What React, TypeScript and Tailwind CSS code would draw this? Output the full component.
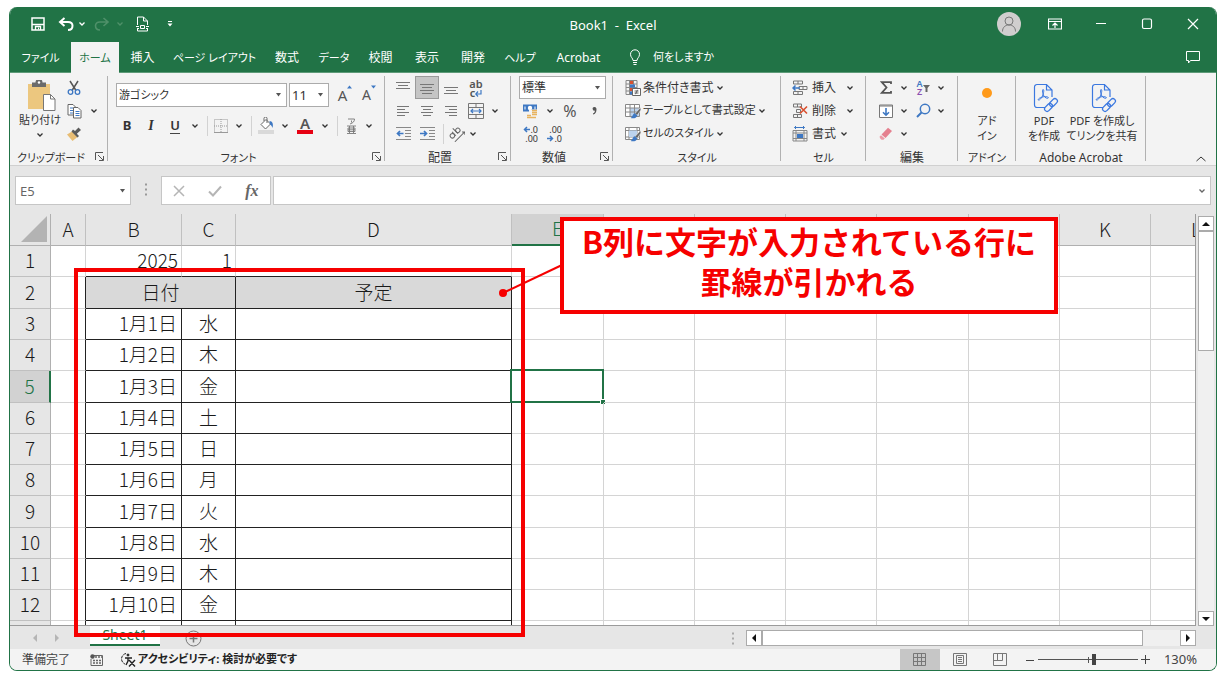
import type { ReactNode } from 'react'
import clsx from 'clsx'

interface IconProps {
  children: ReactNode
  w?: number
  h?: number
  className?: string
}

function Icon({ children, w = 16, h = 16, className }: IconProps) {
  return (
    <svg width={w} height={h} viewBox={`0 0 ${w} ${h}`} fill="none" stroke="currentColor" className={clsx('shrink-0', className)} aria-hidden="true">
      {children}
    </svg>
  )
}

function Chevron({ className = 'w-4' }: { className?: string }) {
  return (
    <button className={clsx('flex h-5 shrink-0 items-center justify-center', className)} aria-label="▾">
      <Icon w={8} h={6}>
        <path d="M1.500 1.500 4 4l2.500-2.500" strokeWidth="1.300" />
      </Icon>
    </button>
  )
}

function Tool({ children, label, className = 'w-6' }: { children: ReactNode; label: string; className?: string }) {
  return (
    <button aria-label={label} className={clsx('flex h-[23px] shrink-0 items-center justify-center', className)}>
      {children}
    </button>
  )
}

function Divider() {
  return (
    <span className="flex h-5 w-2 shrink-0 justify-center">
      <span className="w-px bg-[#d2d2d2]" />
    </span>
  )
}

function Launcher() {
  return (
    <button className="absolute right-1 bottom-1 text-[#555]" aria-label="↘">
      <Icon w={9} h={9}>
        <path d="M.5 8V.5H8M3 3l5 5M8.500 4v4.500H4" />
      </Icon>
    </button>
  )
}

interface GroupProps {
  title: string
  width: string
  small?: boolean
  launcher?: boolean
  children: ReactNode
}

function Group({ title, width, small, launcher, children }: GroupProps) {
  return (
    <section className={clsx('relative flex shrink-0 flex-col after:absolute after:top-0 after:right-0 after:bottom-1 after:w-px after:bg-[#b1b1b1]', width)}>
      <div className="h-[72px]">{children}</div>
      <h2 className={clsx('h-[17px] text-center leading-5', small ? 'text-[11px]' : 'text-xs', launcher && 'pr-4')}>{title}</h2>
      {launcher && <Launcher />}
    </section>
  )
}

function Combo({ label, value, className }: { label: string; value: string; className: string }) {
  return (
    <div className={clsx('relative shrink-0 border border-[#ababab] bg-white', className)}>
      <select aria-label={label} className="block h-full w-full appearance-none bg-transparent pl-0.5 leading-5 outline-none">
        <option>{value}</option>
      </select>
      <Icon w={7} h={4} className="pointer-events-none absolute top-1/2 right-1 -translate-y-1/2">
        <path d="M1 0h5L3.500 3.500z" fill="#555" stroke="none" />
      </Icon>
    </div>
  )
}

const tabs = [
  { name: 'ファイル', cls: 'w-[61px] text-[11px]' },
  { name: 'ホーム', cls: 'w-12 text-[11px]', active: true },
  { name: '挿入', cls: 'w-[47px] text-xs' },
  { name: 'ページ レイアウト', cls: 'w-[97px] text-[11px]' },
  { name: '数式', cls: 'w-12 text-xs' },
  { name: 'データ', cls: 'w-[46px] text-[11px]' },
  { name: '校閲', cls: 'w-[47px] text-xs' },
  { name: '表示', cls: 'w-[46px] text-xs' },
  { name: '開発', cls: 'w-[46px] text-xs' },
  { name: 'ヘルプ', cls: 'w-12 text-[11px]' },
  { name: 'Acrobat', cls: 'w-[69px] text-xs' },
]

function TitleBar() {
  return (
    <header className="relative flex h-[35px] shrink-0 items-center bg-[#217346] text-white">
      <div className="flex items-center pb-0.5 pl-5">
        <Tool label="上書き保存" className="w-4">
          <Icon w={14} h={14}>
            <path d="M1 1h12v12H1z" strokeWidth="1.500" />
            <path d="M1 7.500h12M4.500 13v-3.500h5V13" strokeWidth="1.300" />
            <path d="M7.500 10.500v2" />
          </Icon>
        </Tool>
        <Tool label="元に戻す" className="ml-2.5 w-5">
          <Icon w={16} h={14}>
            <path d="M6.500 1 2 5l4.500 4M2.500 5H10c3 0 4.500 1.500 4.500 3.800S13 13 10 13" strokeWidth="2" />
          </Icon>
        </Tool>
        <Chevron className="w-3" />
        <Tool label="やり直し" className="ml-1 w-5 text-[#4f9069]">
          <Icon w={16} h={14}>
            <path d="M9.500 1 14 5 9.500 9M13.500 5H6C3 5 1.500 6.500 1.500 8.800S3 13 6 13" strokeWidth="1.600" />
          </Icon>
        </Tool>
        <Chevron className="w-4 text-[#4f9069]" />
        <Tool label="印刷プレビュー" className="ml-1 w-5">
          <Icon w={13} h={16}>
            <path d="M1.500 9V1h6l4 4v4M7.500 1v4h4M1.500 12.500v2.500h10v-2.500" />
            <path d="M0 10.500h3M10 10.500h3M4.500 9.500h4v3h-4zM1 12.500h2M10 12.500h2" />
          </Icon>
        </Tool>
        <Tool label="クイック アクセス ツール バーのユーザー設定" className="ml-2.5 w-4">
          <Icon w={6} h={6}>
            <path d="M1 .5h4" />
            <path d="M.5 2.500h5L3 5.500z" fill="currentColor" stroke="none" />
          </Icon>
        </Tool>
      </div>
      <h1 className="absolute left-1/2 -translate-x-1/2 pt-0.5 text-[13px] whitespace-pre">Book1  -  Excel</h1>
      <div className="ml-auto flex items-center pb-0.5">
        <button aria-label="アカウント" className="mr-[11px] rounded-full bg-[#d0cece] text-[#777]">
          <Icon w={24} h={24}>
            <circle cx="12" cy="9" r="4" />
            <path d="M5.500 19.500c0-4 2.500-6.500 6.500-6.500s6.500 2.500 6.500 6.500" />
          </Icon>
        </button>
        <Tool label="リボンの表示オプション" className="w-[46px]">
          <Icon w={14} h={12}>
            <path d="M.5 1h13v10H.5zM.5 3.500h13M7 10V5.500M4.500 7.500 7 5l2.500 2.500" strokeWidth="1.200" />
          </Icon>
        </Tool>
        <Tool label="最小化" className="w-[46px]">
          <Icon w={12} h={12}><path d="M1 5.500h10" /></Icon>
        </Tool>
        <Tool label="最大化" className="w-[46px]">
          <Icon w={12} h={12}><rect x="1.500" y="1" width="9" height="9.500" rx="1.500" strokeWidth="1.200" /></Icon>
        </Tool>
        <Tool label="閉じる" className="w-[46px]">
          <Icon w={12} h={12}><path d="m1 1 10 10M11 1 1 11" strokeWidth="1.200" /></Icon>
        </Tool>
      </div>
    </header>
  )
}

function TabBar() {
  return (
    <nav className="flex h-[31px] shrink-0 items-stretch border-b border-[#5d9a78] bg-[#217346] text-white">
      {tabs.map((tab) => (
        <button key={tab.name} className={clsx('shrink-0 pt-0.5 whitespace-nowrap', tab.cls, tab.active && '-mb-px bg-[#f3f3f3] text-[#217346]')}>
          {tab.name}
        </button>
      ))}
      <button className="ml-3 flex items-center gap-3 pl-1 text-[11px]">
        <Icon w={12} h={16}>
          <path d="M4 11.500C4 9 1.500 8.500 1.500 5.300a4.500 4.500 0 0 1 9 0C10.500 8.500 8 9 8 11.500zM4 13.500h4M4.500 15.500h3" />
        </Icon>
        何をしますか
      </button>
      <button className="mr-[15px] ml-auto" aria-label="コメント">
        <Icon>
          <path d="M1.500 2.500h13v9h-9l-2 2.500v-2.500h-2z" />
        </Icon>
      </button>
    </nav>
  )
}

function ClipboardGroup() {
  return (
    <Group title="クリップボード" width="w-[98px]" small launcher>
      <div className="flex pl-2">
        <button className="flex w-11 flex-col items-center pt-1">
          <Icon w={30} h={32} className="ml-1">
            <path d="M1 4h22v25H1z" fill="#ecc77f" stroke="none" />
            <path d="M5 2.500h3.500a3.500 3.500 0 0 1 7 0H19V7H5z" fill="#6b6b6b" stroke="none" />
            <circle cx="12" cy="2.500" r="1.200" fill="#fff" stroke="none" />
            <path d="M16.500 14.500h7l4.500 4.500v11.500H16.500z" fill="#fff" stroke="#777" />
            <path d="M23.500 14.500V19H28" stroke="#777" />
          </Icon>
          <span className="text-[11px] leading-4 whitespace-nowrap">貼り付け</span>
          <Icon w={8} h={6} className="mt-1"><path d="M1.500 1.500 4 4l2.500-2.500" strokeWidth="1.300" /></Icon>
        </button>
        <div>
          <Tool label="切り取り" className="w-6">
            <Icon w={14} h={16}>
              <path d="M3 1l6 9.500M11 1 5 10.500" stroke="#555" strokeWidth="1.500" />
              <circle cx="3.500" cy="12" r="2.300" stroke="#3e78c3" strokeWidth="1.300" />
              <circle cx="10.500" cy="12" r="2.300" stroke="#3e78c3" strokeWidth="1.300" />
            </Icon>
          </Tool>
          <div className="flex items-center">
            <Tool label="コピー">
              <Icon w={15} h={16}>
                <path d="M1 1.500h5l3 3V12H1z" fill="#fff" stroke="#666" />
                <path d="M3 5h3M3 7.500h3M3 10h3" stroke="#3e78c3" />
                <path d="M6.500 4.500h4.500l3 3V15H6.500z" fill="#fff" stroke="#666" />
                <path d="M8.500 8.500h4M8.500 10.500h4M8.500 12.500h4" stroke="#3e78c3" />
              </Icon>
            </Tool>
            <Chevron />
          </div>
          <Tool label="書式のコピー/貼り付け">
            <Icon w={14} h={14}>
              <path d="m0 7.500 5-3 5.500 5.500-5 4z" fill="#e8bd74" stroke="none" />
              <path d="m4.500 4.500 6 6L12 9 9.800 6.800 14 3 11.500.5 8 4 6 2.500z" fill="#5b5b5b" stroke="none" />
            </Icon>
          </Tool>
        </div>
      </div>
    </Group>
  )
}

function FontGroup() {
  return (
    <Group title="フォント" width="w-[277px]" small launcher>
      <div className="mt-[7px] flex h-6 items-center gap-0.5 pl-2">
        <Combo label="フォント名" value="游ゴシック" className="h-6 w-[171px] text-[11px]" />
        <Combo label="フォント サイズ" value="11" className="h-6 w-10 text-[13px]" />
        <Tool label="フォント サイズの拡大" className="ml-0.5 w-6">
          <span className="text-[15px] leading-5 text-[#555]">A</span>
          <Icon w={5} h={12} className="self-start"><path d="M0 4.500 2.500 1.500 5 4.500z" fill="#3e78c3" stroke="none" /></Icon>
        </Tool>
        <Tool label="フォント サイズの縮小" className="w-5">
          <span className="text-sm leading-5 text-[#555]">A</span>
          <Icon w={5} h={12} className="self-start"><path d="M0 1.500h5L2.500 4.500z" fill="#3e78c3" stroke="none" /></Icon>
        </Tool>
      </div>
      <div className="mt-[7px] flex items-center pl-[7px] text-[13px]">
        <Tool label="太字"><b>B</b></Tool>
        <Tool label="斜体"><i className="font-['Liberation_Serif'] text-sm font-bold">I</i></Tool>
        <Tool label="下線"><span className="border-b border-[#444] leading-[15px] font-semibold">U</span></Tool>
        <Chevron />
        <Divider />
        <Tool label="罫線" className="w-5">
          <Icon w={14} h={14}>
            <path d="M.5.5h13v13H.5zM7 0v14M0 7h14" stroke="#999" strokeDasharray="1 1" />
            <path d="M0 13.500h14" stroke="#999" />
          </Icon>
        </Tool>
        <Chevron />
        <Divider />
        <Tool label="塗りつぶしの色" className="w-[22px]">
          <Icon w={17} h={17}>
            <path d="M3 7.500 8 2.500l4.500 4.500-5 5zM6 4V1.500a1.500 1.500 0 0 1 3 0V6" stroke="#666" fill="#fff" />
            <path d="M11.500 4c3 0 4 3 3 7-.5-2-1.500-3-2.500-3.500z" fill="#3e78c3" stroke="none" />
            <path d="M0 13h16v4H0z" fill="#d9d9d9" stroke="none" />
          </Icon>
        </Tool>
        <Chevron />
        <Tool label="フォントの色" className="w-6 flex-col">
          <span className="text-[15px] leading-[13px] font-semibold text-[#555]">A</span>
          <span className="h-1 w-4 bg-[#e60012]" />
        </Tool>
        <Chevron />
        <Divider />
        <Tool label="ふりがなの表示/非表示" className="w-5">
          <Icon w={9} h={16}>
            <path d="M1 1h6.500C7.500 3.500 6 5 3 6M4.500 2.500v2M0 8h9M0 15.500h9M2.500 8v7M6.500 8v7M1 10v3.500h7V10zM1 11.800h7" stroke="#777" strokeWidth=".9" />
          </Icon>
        </Tool>
        <Chevron />
      </div>
    </Group>
  )
}

function Lines({ d, w = 14, h = 14 }: { d: string; w?: number; h?: number }) {
  return <Icon w={w} h={h}><path d={d} stroke="#777" /></Icon>
}

function AlignGroup() {
  return (
    <Group title="配置" width="w-[126px]" launcher>
      <div className="flex pl-1.5">
        <Tool label="上揃え"><Lines d="M0 1.500h14M2 4.500h10M0 7.500h14" /></Tool>
        <Tool label="上下中央揃え" className="w-6 border border-[#9a9a9a] bg-[#c5c5c5]"><Lines d="M0 3.500h14M2 6.500h10M0 9.500h14M2 12.500h10" /></Tool>
        <Tool label="下揃え"><Lines d="M0 6.500h14M2 9.500h10M0 12.500h14" /></Tool>
        <Tool label="折り返して全体を表示する" className="w-[26px] flex-col">
          <span className="text-[11px] leading-[9px] font-semibold text-[#555]">ab</span>
          <span className="flex items-end text-[11px] leading-[9px] font-semibold text-[#555]">
            c
            <Icon w={7} h={7}><path d="M6 0v4H1M3 1.500.8 4 3 6.500" stroke="#3e78c3" strokeWidth="1.200" /></Icon>
          </span>
        </Tool>
      </div>
      <div className="flex items-center pl-1.5">
        <Tool label="左揃え"><Lines w={12} h={12} d="M0 1.500h12M0 4.500h8M0 7.500h12M0 10.500h8" /></Tool>
        <Tool label="中央揃え"><Lines w={12} h={12} d="M0 1.500h12M2 4.500h8M0 7.500h12M2 10.500h8" /></Tool>
        <Tool label="右揃え"><Lines w={12} h={12} d="M0 1.500h12M4 4.500h8M0 7.500h12M4 10.500h8" /></Tool>
        <Tool label="セルを結合して中央揃え" className="w-[26px]">
          <Icon>
            <path d="M.5.5h15v15H.5zM.5 4.500h15M.5 11.500h15M8 .5v4M8 11.500v4" stroke="#777" />
            <path d="M3 8h10M5 6 3 8l2 2M11 6l2 2-2 2" stroke="#3e78c3" strokeWidth="1.200" />
          </Icon>
        </Tool>
        <Chevron className="w-3" />
      </div>
      <div className="flex items-center pl-1.5">
        <Tool label="インデントを減らす">
          <Icon w={15} h={13}>
            <path d="M0 .5h15M9 3.500h6M9 6.500h6M9 9.500h6M0 12.500h15" stroke="#888" />
            <path d="M7.500 6.500H1.500M4 4 1.500 6.500 4 9" stroke="#3e78c3" strokeWidth="1.700" />
          </Icon>
        </Tool>
        <Tool label="インデントを増やす">
          <Icon w={15} h={13}>
            <path d="M0 .5h15M9 3.500h6M9 6.500h6M9 9.500h6M0 12.500h15" stroke="#888" />
            <path d="M0 6.500h6M4 4l2.500 2.500L4 9" stroke="#3e78c3" strokeWidth="1.700" />
          </Icon>
        </Tool>
        <Divider />
        <Tool label="方向" className="w-5">
          <Icon>
            <g transform="rotate(-45 8 8)" stroke="#666">
              <circle cx="3.500" cy="6" r="2.200" />
              <path d="M6 3v5.500M9 1v7.500" />
              <circle cx="11.200" cy="6" r="2.200" />
              <path d="M1 12h14M13 10l2 2-2 2" />
            </g>
          </Icon>
        </Tool>
        <Chevron className="w-3" />
      </div>
    </Group>
  )
}

function NumberGroup() {
  return (
    <Group title="数値" width="w-[102px]" launcher>
      <div className="pl-2">
        <Combo label="表示形式" value="標準" className="h-[23px] w-[87px] text-xs" />
      </div>
      <div className="flex items-center pl-[7px]">
        <Tool label="通貨表示形式">
          <Icon>
            <path d="M1 1.500h14v7H1z" fill="#3e78c3" stroke="none" />
            <circle cx="8" cy="5" r="2.200" fill="#fff" stroke="none" />
            <path d="M3 3.500v3M13 3.500v3" stroke="#fff" />
            <path d="M7 6.500h9v9H7z" fill="#f3f3f3" stroke="none" />
            <path d="M10 7.500h5M10 9.500h5M10 11.500h5M5 12.500h4M5 14.500h9" stroke="#e8b35f" strokeWidth="1.300" />
          </Icon>
        </Tool>
        <Chevron />
        <Tool label="パーセント スタイル"><span className="text-base leading-5 text-[#555]">%</span></Tool>
        <Tool label="桁区切りスタイル">
          <Icon w={5} h={8}>
            <path d="M2.500 0a1.800 1.800 0 1 0 .5 3.500C2.900 5 2 6 1 6.500v1C3.500 7 4.500 5 4.500 2.200 4.500.8 3.600 0 2.500 0z" fill="#555" stroke="none" />
          </Icon>
        </Tool>
      </div>
      <div className="flex items-center pl-[7px]">
        <Tool label="小数点以下の表示桁数を増やす" className="w-6 flex-col items-end pr-1">
          <span className="flex items-center text-[9px] leading-[9px]">
            <Icon w={7} h={7}><path d="M7 3.500H1.500M4 1 1.500 3.500 4 6" stroke="#3e78c3" strokeWidth="1.500" /></Icon>.0
          </span>
          <span className="text-[9px] leading-[9px]">.00</span>
        </Tool>
        <Tool label="小数点以下の表示桁数を減らす" className="w-6 flex-col items-end pr-1">
          <span className="text-[9px] leading-[9px]">.00</span>
          <span className="flex items-center text-[9px] leading-[9px]">
            <Icon w={7} h={7}><path d="M0 3.500h5.500M3 1l2.500 2.500L3 6" stroke="#3e78c3" strokeWidth="1.500" /></Icon>.0
          </span>
        </Tool>
      </div>
    </Group>
  )
}

function MenuButton({ icon, text, className, gap = 'gap-1' }: { icon: ReactNode; text: string; className?: string; gap?: string }) {
  return (
    <button className={clsx('flex h-[23px] items-center whitespace-nowrap', gap, className)}>
      {icon}
      <span>{text}</span>
      <Icon w={8} h={6} className="ml-auto"><path d="M1.500 1.500 4 4l2.500-2.500" strokeWidth="1.300" /></Icon>
    </button>
  )
}

function Brush() {
  return (
    <>
      <path d="M15.500 4.500 10 10.500l2 2L16 7z" fill="#666" stroke="#f3f3f3" strokeWidth=".6" />
      <path d="M9.800 10.200C7.500 10.800 8 13.500 5.500 15c3 .8 6 .3 6.800-2.500z" fill="#3e78c3" stroke="none" />
    </>
  )
}

function StyleGroup() {
  return (
    <Group title="スタイル" width="w-[168px]" small>
      <div className="flex flex-col items-start pl-3 text-xs">
        <MenuButton
          gap="gap-0.5"
          text="条件付き書式"
          icon={
            <Icon>
              <path d="M1 .5h11v14H1zM1 4h11M1 7.500h11M1 11h11M4.500.5v14M8.500.5v14" stroke="#888" />
              <path d="M5 1h3v3H5zM5 8h3v3H5z" fill="#d9502f" stroke="none" />
              <path d="M5 4.500h5v3H5zM5 11.500h2v3H5z" fill="#3e78c3" stroke="none" />
              <path d="M7.500 8.500h8v7h-8z" fill="#fff" stroke="#666" />
              <path d="M9.500 11h4M9.500 13h4M12.500 9.800l-2 4.400" stroke="#555" strokeWidth=".9" />
            </Icon>
          }
        />
        <MenuButton
          gap="gap-0.5"
          className="text-[11px]"
          text="テーブルとして書式設定"
          icon={
            <Icon>
              <path d="M.5 1.500h14v12H.5z" fill="#fff" stroke="#888" />
              <path d="M5 5h9v8H5z" fill="#bcd3ee" stroke="none" />
              <path d="M.5 5h14M.5 9h14M5 1.500v12M9.500 1.500v12" stroke="#888" />
              <Brush />
            </Icon>
          }
        />
        <MenuButton
          gap="gap-0.5"
          className="text-[11px]"
          text="セルのスタイル"
          icon={
            <Icon>
              <path d="M.5 1.500h14v12H.5zM.5 4.500h14M.5 11h14M4 1.500v12M12 1.500v12" stroke="#888" fill="#fff" />
              <path d="M4 4.500h8V11H4z" fill="#bcd3ee" stroke="none" />
              <Brush />
            </Icon>
          }
        />
      </div>
    </Group>
  )
}

function CellsGroup() {
  return (
    <Group title="セル" width="w-[85px]" small>
      <div className="pl-[11px] text-xs">
        <MenuButton
          className="w-[62px]"
          text="挿入"
          icon={
            <Icon>
              <path d="M1.500 1h9v3h-9zM6 1v3M1.500 11.500h9v3h-9zM6 11.500v3M7 6.500h8v3H7zM11 6.500v3" stroke="#777" />
              <path d="M8 8H1M3.500 5.500 1 8l2.500 2.500" stroke="#3e78c3" strokeWidth="1.500" />
            </Icon>
          }
        />
        <MenuButton
          className="w-[62px]"
          text="削除"
          icon={
            <Icon>
              <path d="M1.500 1h8v3h-8zM5.500 1v3M1.500 11.500h8v3h-8zM5.500 11.500v3M4.500 6.500h4v3h-4z" stroke="#777" />
              <path d="m8 3.500 7 7M15 3.500l-7 7" stroke="#d9502f" strokeWidth="1.600" />
            </Icon>
          }
        />
        <MenuButton
          className="w-[55px]"
          text="書式"
          icon={
            <Icon>
              <path d="M2.500 1.500h10M4 0 2.500 1.500 4 3M11 0l1.500 1.500L11 3" stroke="#3e78c3" />
              <path d="M1 4.500h14V15H1zM1 7h14M1 12.500h14M4 4.500V15M12 4.500V15" stroke="#888" />
              <path d="M5 8h6v4H5z" fill="#3e78c3" stroke="none" />
            </Icon>
          }
        />
      </div>
    </Group>
  )
}

function EditGroup() {
  return (
    <Group title="編集" width="w-[92px]">
      <div className="flex items-center pl-[9px]">
        <Tool label="オート SUM" className="w-[22px]">
          <Icon w={12} h={13}><path d="M11 3V1.200H1.800L6.500 6.500l-4.700 5.300H11V10" stroke="#555" strokeWidth="1.800" /></Icon>
        </Tool>
        <Chevron className="w-3.5" />
        <Tool label="並べ替えとフィルター">
          <span className="flex flex-col text-[9px] leading-[8px] font-semibold">
            <span className="text-[#3e78c3]">A</span>
            <span className="text-[#8a4fb0]">Z</span>
          </span>
          <Icon w={7} h={8}><path d="M0 1h7L4.500 4v4h-2V4z" fill="#666" stroke="none" /></Icon>
        </Tool>
        <Chevron className="w-3" />
      </div>
      <div className="flex items-center pl-[9px]">
        <Tool label="フィル" className="w-[22px]">
          <Icon w={14} h={14}>
            <path d="M.5 1h13v12.500H.5z" fill="#fff" stroke="#777" />
            <path d="M1 2h12" stroke="#777" />
            <path d="M7 4v7M4 8.200l3 3 3-3" stroke="#3e78c3" strokeWidth="1.600" />
          </Icon>
        </Tool>
        <Chevron className="w-3.5" />
        <Tool label="検索と選択">
          <Icon w={15} h={15}>
            <circle cx="9" cy="6" r="4.700" stroke="#3e78c3" strokeWidth="1.500" />
            <path d="M5.500 9.500 1 14" stroke="#3e78c3" strokeWidth="2" />
          </Icon>
        </Tool>
        <Chevron className="w-3" />
      </div>
      <div className="flex items-center pl-[9px]">
        <Tool label="クリア" className="w-[22px]">
          <Icon w={14} h={13}>
            <path d="M9 .8 13 4 6.500 11 2.500 7.500z" fill="#e5808f" stroke="none" />
            <path d="M2 8.200 5.800 11.600 4.500 12.800H2.500L.8 11V9.500z" fill="#ec9ba7" stroke="none" />
          </Icon>
        </Tool>
        <Chevron className="w-3.5" />
      </div>
    </Group>
  )
}

function PdfIcon() {
  return (
    <Icon w={26} h={30} className="ml-1 text-[#3b78e0]">
      <path d="M12 24.500H4A2.500 2.500 0 0 1 1.500 22V4A2.500 2.500 0 0 1 4 1.500h9.500l5.500 5.500V14M13.500 1.500V7H19" strokeWidth="1.200" />
      <path d="M10 6.500c1.500 0 .5 4-.5 6.500-.8 2-3.500 5-4.200 4-.8-1.200 3-3 5.500-3.300 2.500-.3 5 .2 4.500 1.300-.6 1-3.300-.3-4.300-1.800C9.800 11.500 9 6.500 10 6.500z" />
      <g transform="rotate(-45 18 22)" strokeWidth="1.300">
        <rect x="10" y="19.500" width="9" height="5" rx="2.500" />
        <rect x="17" y="19.500" width="9" height="5" rx="2.500" />
      </g>
    </Icon>
  )
}

function Ribbon() {
  return (
    <div className="flex h-[93px] shrink-0 overflow-hidden border-b border-[#d0d0d0] bg-[#f3f3f3] pt-[3px] text-[#333]">
      <ClipboardGroup />
      <FontGroup />
      <AlignGroup />
      <NumberGroup />
      <StyleGroup />
      <CellsGroup />
      <EditGroup />
      <Group title="アドイン" width="w-[58px]" small>
        <button className="flex w-full flex-col items-center pt-[11px] text-[11px] leading-[15px]">
          <Icon w={12} h={12} className="mb-3.5"><circle cx="6" cy="6" r="5" fill="#ff9a1a" stroke="none" /></Icon>
          <span>アド<br />イン</span>
        </button>
      </Group>
      <Group title="Adobe Acrobat" width="w-[130px]">
        <div className="flex pl-[5px] text-[11px] leading-[15px]">
          <button className="flex w-[46px] flex-col items-center pt-[7px]">
            <PdfIcon />
            <span className="whitespace-nowrap">PDF<br />を作成</span>
          </button>
          <button className="flex w-[70px] flex-col items-center pt-[7px]">
            <PdfIcon />
            <span className="whitespace-nowrap">PDF を作成し<br />てリンクを共有</span>
          </button>
        </div>
      </Group>
      <button className="mr-2.5 mb-[3px] ml-auto self-end" aria-label="リボンを折りたたむ">
        <Icon w={10} h={6}><path d="m.5 5 4.500-4 4.500 4" /></Icon>
      </button>
    </div>
  )
}

function FormulaBar() {
  return (
    <div className="flex h-12 shrink-0 items-start bg-[#e6e6e6] px-[5px] pt-2.5 text-[#666]">
      <Combo label="名前ボックス" value="E5" className="h-[29px] w-[116px] border-[#c6c6c6] pl-0.5 text-[13px]" />
      <Icon w={4} h={13} className="mx-[13px] mt-[7px]">
        <path d="M1 1.500h2M1 6.500h2M1 11.500h2" stroke="#999" strokeWidth="2" />
      </Icon>
      <div className="flex h-[29px] w-[110px] items-center justify-around border border-[#c6c6c6] bg-white">
        <button aria-label="キャンセル"><Icon w={12} h={12}><path d="m1 1 10 10M11 1 1 11" stroke="#b5b5b5" strokeWidth="1.500" /></Icon></button>
        <button aria-label="入力"><Icon w={14} h={12}><path d="m1 6.500 4 4L13 1.500" stroke="#b5b5b5" strokeWidth="2" /></Icon></button>
        <button className="font-['Liberation_Serif'] text-base leading-4 font-bold italic" aria-label="関数の挿入">fx</button>
      </div>
      <div className="ml-0.5 flex h-[29px] flex-1 items-center border border-[#c6c6c6] bg-white">
        <input aria-label="数式バー" className="h-full flex-1 px-2 outline-none" />
        <Chevron />
      </div>
    </div>
  )
}

const columns = [
  { name: 'A', width: 'w-[35px]' },
  { name: 'B', width: 'w-[96px]' },
  { name: 'C', width: 'w-[54px]' },
  { name: 'D', width: 'w-[276px]' },
  { name: 'E', width: 'w-[92px]' },
  { name: 'F', width: 'w-[91px]' },
  { name: 'G', width: 'w-[91px]' },
  { name: 'H', width: 'w-[91px]' },
  { name: 'I', width: 'w-[92px]' },
  { name: 'J', width: 'w-[91px]' },
  { name: 'K', width: 'w-[91px]' },
  { name: 'L', width: 'w-[91px]' },
]

const schedule = [
  ['1月1日', '水'],
  ['1月2日', '木'],
  ['1月3日', '金'],
  ['1月4日', '土'],
  ['1月5日', '日'],
  ['1月6日', '月'],
  ['1月7日', '火'],
  ['1月8日', '水'],
  ['1月9日', '木'],
  ['1月10日', '金'],
  ['', ''],
]

const emptyColumns = ['E', 'F', 'G', 'H', 'I', 'J', 'K', 'L']
const tallRows = [5, 9]

const line = 'border-r border-b border-[#d4d4d4]'
const ruled = 'border-r border-b border-[#222]'

function RowHeader({ row }: { row: number }) {
  return (
    <th
      scope="row"
      className={clsx(
        'border-b border-b-[#c0c0c0] font-light',
        row === 5 ? 'border-r-2 border-r-[#217346] bg-[#d2d2d2] text-[#217346]' : 'border-r border-r-[#b0b0b0] bg-[#e6e6e6]',
      )}
    >
      {row < 13 && row}
    </th>
  )
}

function EmptyCells({ row }: { row: number }) {
  return (
    <>
      {emptyColumns.map((col) => (
        <td key={col} className={clsx(line, 'relative')}>
          {row === 5 && col === 'E' && (
            <span className="absolute -top-0.5 -right-px -bottom-px -left-0.5 border-2 border-[#217346]">
              <span className="absolute -right-[3px] -bottom-[3px] size-[5px] border-t border-l border-white bg-[#217346]" />
            </span>
          )}
        </td>
      ))}
    </>
  )
}

function Sheet() {
  return (
    <div className="min-w-0 flex-1 overflow-hidden border-r border-b border-[#9b9b9b] bg-white">
      <table className="w-[1232px] min-w-full table-fixed border-separate border-spacing-0 font-['Noto_Sans_CJK_JP',sans-serif] text-[19px] leading-[28px] font-light text-[#1a1a1a] [&_td]:pb-0.5 [&_th]:pb-0.5">
        <thead>
          <tr className="h-8">
            <th className="w-[41px] border-r border-b border-[#b0b0b0] bg-[#e6e6e6]">
              <Icon w={27} h={26} className="mr-0.5 ml-auto"><path d="M26 0v26H0z" fill="#b3b3b3" stroke="none" /></Icon>
            </th>
            {columns.map((col) => (
              <th
                key={col.name}
                scope="col"
                className={clsx(
                  'border-r border-r-[#c0c0c0] font-light',
                  col.width,
                  col.name === 'E' ? 'border-b-2 border-b-[#217346] bg-[#d2d2d2] text-[#217346]' : 'border-b border-b-[#b0b0b0] bg-[#e6e6e6]',
                )}
              >
                {col.name}
              </th>
            ))}
          </tr>
        </thead>
        <tbody>
          <tr className="h-[31px]">
            <RowHeader row={1} />
            <td className={line} />
            <td className="border-r border-b border-r-[#d4d4d4] border-b-[#222] pr-[3px] text-right">2025</td>
            <td className="border-r border-b border-r-[#d4d4d4] border-b-[#222] pr-[3px] text-right">1</td>
            <td className="border-r border-b border-r-[#d4d4d4] border-b-[#222]" />
            <EmptyCells row={1} />
          </tr>
          <tr className="h-8">
            <RowHeader row={2} />
            <td className="border-r border-b border-r-[#222] border-b-[#d4d4d4]" />
            <td colSpan={2} className={clsx(ruled, 'bg-[#d9d9d9] text-center')}>日付</td>
            <td className={clsx(ruled, 'bg-[#d9d9d9] text-center')}>予定</td>
            <EmptyCells row={2} />
          </tr>
          {schedule.map(([date, day], i) => (
            <tr key={i} className={tallRows.includes(i + 3) ? 'h-8' : 'h-[31px]'}>
              <RowHeader row={i + 3} />
              <td className="border-r border-b border-r-[#222] border-b-[#d4d4d4]" />
              <td className={clsx(ruled, 'pr-1 text-right whitespace-nowrap')}>{date}</td>
              <td className={clsx(ruled, 'text-center')}>{day}</td>
              <td className={ruled} />
              <EmptyCells row={i + 3} />
            </tr>
          ))}
        </tbody>
      </table>
    </div>
  )
}

function VerticalScroll() {
  return (
    <div className="flex w-5 shrink-0 flex-col items-center bg-[#e6e6e6] pt-0.5">
      <div className="flex w-4 flex-1 flex-col bg-[#f0f0f0]">
        <button aria-label="上へ" className="flex h-[15px] items-center justify-center border border-[#ababab] bg-white">
          <Icon w={8} h={4}><path d="m0 4 4-4 4 4z" fill="#111" stroke="none" /></Icon>
        </button>
        <div className="h-[120px] border border-[#ababab] bg-white" />
        <button aria-label="下へ" className="mt-auto flex h-[15px] items-center justify-center border border-[#ababab] bg-white">
          <Icon w={8} h={4}><path d="m0 0 4 4 4-4z" fill="#111" stroke="none" /></Icon>
        </button>
      </div>
    </div>
  )
}

function Annotations() {
  return (
    <>
      <div className="pointer-events-none absolute top-[54px] left-16 z-10 h-[369px] w-[451px] border-4 border-[#f60000]" />
      <svg width="80" height="50" viewBox="0 0 80 50" className="absolute top-[42px] left-[480px] z-10" aria-hidden="true">
        <path d="M13 37 72 9" stroke="#f60000" strokeWidth="2" />
        <circle cx="13" cy="37" r="4" fill="#f60000" />
      </svg>
      <p className="absolute top-[3px] left-[550px] z-20 h-[97px] w-[498px] border-4 border-[#f60000] bg-white text-center font-['Noto_Sans_CJK_JP',sans-serif] text-[31px] leading-10 font-bold whitespace-nowrap text-[#f60000] [font-feature-settings:normal]">
        B列に文字が入力されている行に
        <br />
        罫線が引かれる
      </p>
    </>
  )
}

function SheetTabs() {
  return (
    <div className="flex h-[23px] shrink-0 items-start bg-[#e6e6e6]">
      <div className="flex h-full w-20 items-center gap-4 pl-[22px]">
        <Icon w={6} h={8}><path d="M5 0v8L1 4z" fill="#b5b5b5" stroke="none" /></Icon>
        <Icon w={6} h={8}><path d="M1 0v8l4-4z" fill="#b5b5b5" stroke="none" /></Icon>
      </div>
      <button className="h-5 w-[70px] border-b-2 border-[#217346] bg-white text-sm leading-[18px] text-[#217346]">Sheet1</button>
      <button aria-label="新しいシート" className="mt-1 ml-[25px]">
        <Icon w={17} h={17}>
          <circle cx="8.500" cy="8.500" r="7.500" stroke="#777" />
          <path d="M8.500 4.500v8M4.500 8.500h8" stroke="#777" strokeWidth="1.500" />
        </Icon>
      </button>
      <div className="mt-1 mr-5 ml-auto flex h-4 w-[465px] items-stretch">
        <Icon w={4} h={13} className="mt-0.5 mr-[11px]">
          <path d="M1 1.500h2M1 6.500h2M1 11.500h2" stroke="#aaa" strokeWidth="2" />
        </Icon>
        <button aria-label="左へ" className="flex w-4 items-center justify-center border border-[#ababab] bg-white">
          <Icon w={4} h={8}><path d="M4 0v8L0 4z" fill="#111" stroke="none" /></Icon>
        </button>
        <div className="w-[381px] border border-[#ababab] bg-white" />
        <div className="flex-1 bg-[#f0f0f0]" />
        <button aria-label="右へ" className="flex w-4 items-center justify-center border border-[#ababab] bg-white">
          <Icon w={4} h={8}><path d="M0 0v8l4-4z" fill="#111" stroke="none" /></Icon>
        </button>
      </div>
    </div>
  )
}

function StatusBar() {
  return (
    <footer className="flex h-[21px] shrink-0 items-center bg-[#f3f3f3] pl-3 text-xs text-[#444]">
      <span>準備完了</span>
      <Icon w={13} h={12} className="ml-5">
        <path d="M3 1.500h9.500v10H1V5" stroke="#666" />
        <circle cx="2.500" cy="2.500" r="2.200" fill="#555" stroke="none" />
        <path d="M5 3h7M3 6.500h8M3 9h8" stroke="#666" strokeWidth="1.500" strokeDasharray="2 1" />
      </Icon>
      <button className="ml-[17px] flex items-center gap-0.5 text-[11px] font-bold text-[#222]">
        <Icon>
          <path d="M6 1.500a5.500 5.500 0 0 0-1 10.500" strokeDasharray="3 1" />
          <circle cx="8" cy="3" r="1" fill="currentColor" />
          <path d="M5 6h7M8 6v3l-2 4M9 8l6 6.500M15 8l-6 6.500" strokeWidth="1.400" />
        </Icon>
        アクセシビリティ: 検討が必要です
      </button>
      <div className="ml-auto flex h-full items-center">
        <button aria-label="標準" className="flex h-full w-10 items-center justify-center bg-[#c6c6c6]">
          <Icon w={13} h={13}><path d="M.5.5h12v12H.5zM4.500.5v12M8.500.5v12M.5 4.500h12M.5 8.500h12" stroke="#777" /></Icon>
        </button>
        <button aria-label="ページ レイアウト" className="flex w-10 justify-center">
          <Icon w={14} h={13}><path d="M.5.5h13v12H.5zM3.500 2.500h7v8h-7zM5 4.500h4M5 6.500h4M5 8.500h4" stroke="#777" /></Icon>
        </button>
        <button aria-label="改ページ プレビュー" className="flex w-10 justify-center">
          <Icon w={14} h={13}><path d="M.5.5h13v12H.5zM4.500.5v7M9.500.5v7H.5" stroke="#777" /></Icon>
        </button>
        <button aria-label="縮小" className="ml-0.5 flex w-4 justify-center"><Icon w={8} h={8}><path d="M0 4.500h8" /></Icon></button>
        <div className="relative flex h-3 w-[100px] items-center">
          <span className="absolute top-[3px] left-1/2 h-1.5 w-px bg-[#555]" />
          <input
            type="range"
            aria-label="ズーム"
            defaultValue={56}
            className="h-px w-full appearance-none bg-[#555] [&::-webkit-slider-thumb]:h-[11px] [&::-webkit-slider-thumb]:w-1 [&::-webkit-slider-thumb]:appearance-none [&::-webkit-slider-thumb]:bg-[#444]"
          />
        </div>
        <button aria-label="拡大" className="flex w-4 justify-center"><Icon w={9} h={9}><path d="M0 4.500h9M4.500 0v9" /></Icon></button>
        <span className="mr-[19px] ml-2.5 text-[13px]">130%</span>
      </div>
    </footer>
  )
}

export default function App() {
  return (
    <div className="h-screen bg-white px-[9px] pt-[7px] pb-[9px] font-['Noto_Sans','Noto_Sans_CJK_JP',sans-serif] [font-feature-settings:'palt']">
      <main className="flex h-full flex-col overflow-hidden rounded-lg border-x border-b border-[#217346]">
        <TitleBar />
        <TabBar />
        <Ribbon />
        <FormulaBar />
        <div className="relative flex min-h-0 flex-1 bg-[#e6e6e6]">
          <Sheet />
          <VerticalScroll />
          <Annotations />
        </div>
        <SheetTabs />
        <StatusBar />
      </main>
    </div>
  )
}
